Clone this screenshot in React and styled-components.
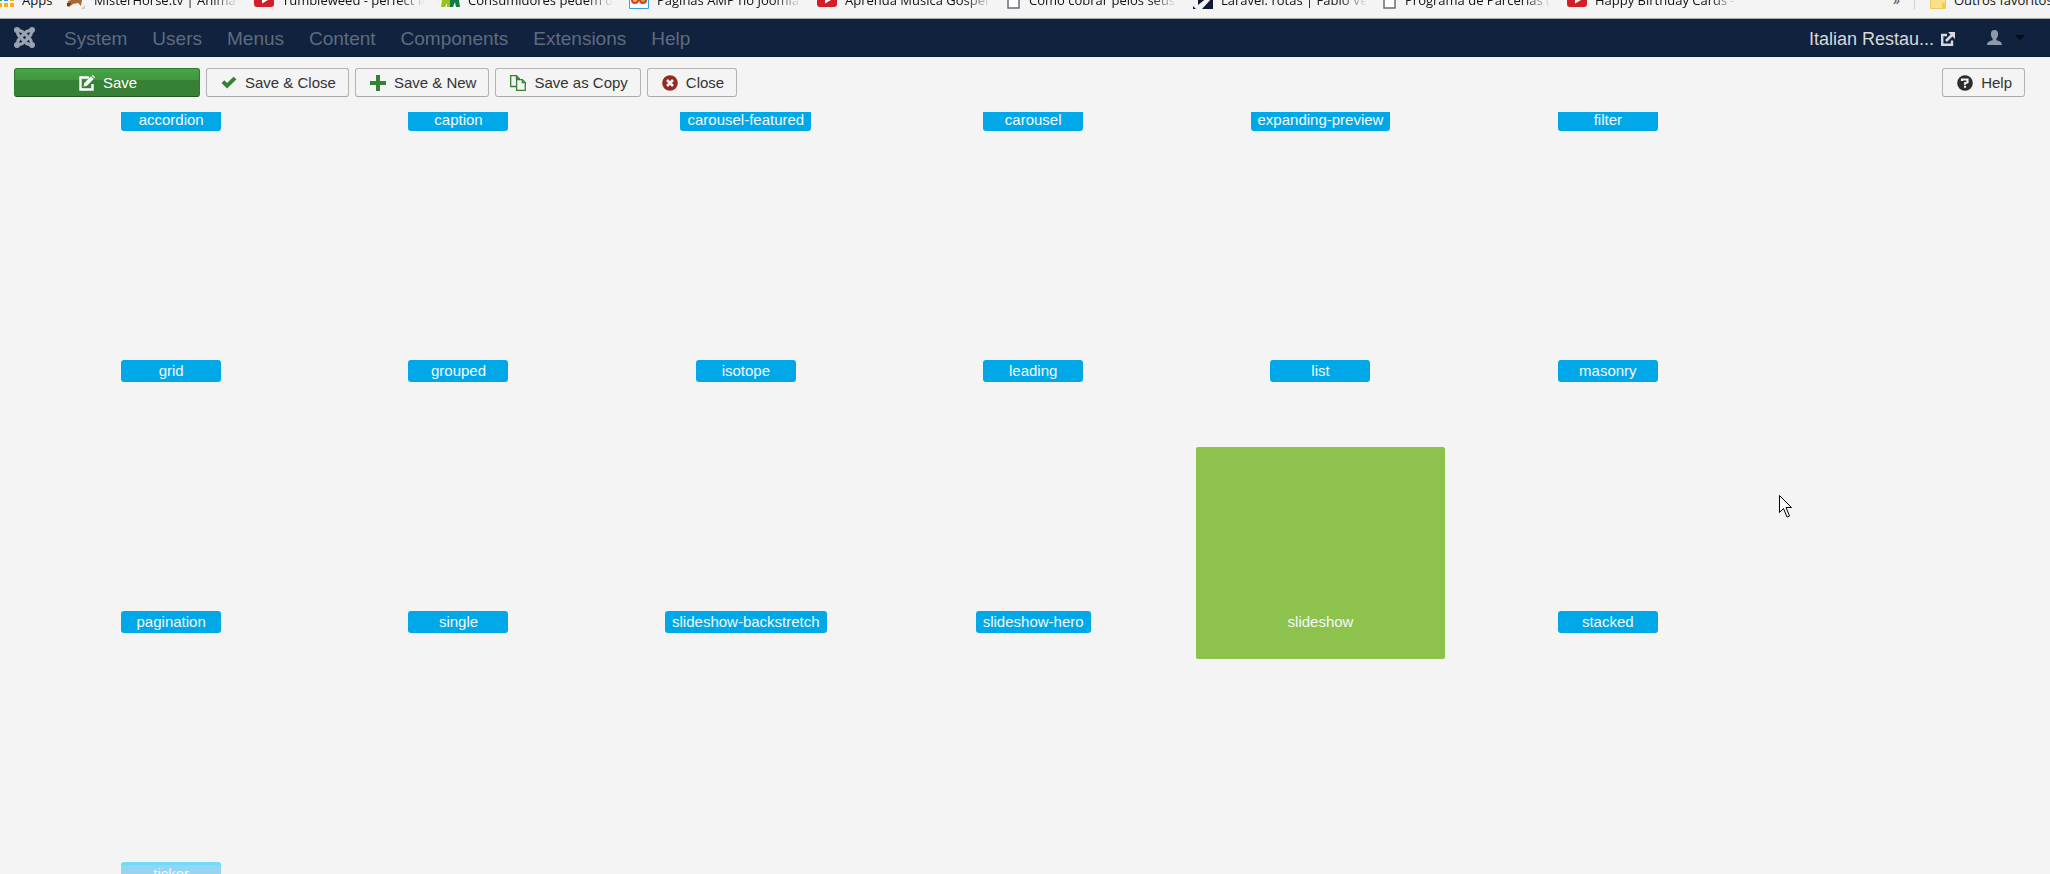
import React from "react";
import styled, { createGlobalStyle } from "styled-components";

const Global = createGlobalStyle`
  * { box-sizing: border-box; }
  body {
    margin: 0;
    background: #f4f4f4;
    font-family: "Liberation Sans", Arial, sans-serif;
    font-size: 15px;
    color: #333;
  }
`;

const Page = styled.div`
  display: flex;
  flex-direction: column;
  height: 100vh;
  overflow: hidden;
`;

const Bookmarks = styled.nav`
  display: flex;
  align-items: flex-end;
  height: 19px;
  padding-bottom: 9px;
  overflow: hidden;
  flex: none;
  border-bottom: 1px solid #a9a9a9;
`;

const Bookmark = styled.a`
  display: flex;
  flex: none;
  align-items: flex-end;
  width: ${(p) => p.$width}px;
  gap: 8px;
  color: #111;
  text-decoration: none;
  svg { flex: none; }
`;

const BookmarkText = styled.span`
  flex: 1;
  min-width: 0;
  margin-right: ${(p) => (p.$fade ? 16 : 0)}px;
  padding-bottom: 1px;
  line-height: 16px;
  font-family: "Open Sans", sans-serif;
  font-size: 13px;
  white-space: nowrap;
  overflow: hidden;
  mask-image: ${(p) => (p.$fade ? "linear-gradient(to left, transparent, #000 26px)" : "none")};
`;

const More = styled.button`
  margin: 0 15px 0 auto;
  padding: 0 14px 1px 0;
  border: 0;
  border-right: 1px solid #d0d0d0;
  background: none;
  font-family: "Open Sans", sans-serif;
  font-size: 14px;
  line-height: 16px;
  color: #444;
`;

const Navbar = styled.header`
  display: flex;
  align-items: center;
  flex: none;
  height: 38px;
  padding: 0 25px 0 14px;
  background: #10223e;
  border-bottom: 1px solid #0d1b33;
  font-size: 19px;
  line-height: 24px;
`;

const Logo = styled.a`
  display: flex;
  margin-right: 29px;
  color: #9ba3b1;
`;

const Menu = styled.nav`
  display: flex;
  gap: 25px;
  padding-top: 2px;
`;

const MenuLink = styled.a`
  color: #5f6b7f;
  text-decoration: none;
`;

const SiteLink = styled.a`
  display: flex;
  align-items: center;
  gap: 7px;
  margin-left: auto;
  padding-top: 2px;
  color: #d9d9d9;
  text-decoration: none;
  font-size: 18px;
`;

const UserButton = styled.button`
  display: flex;
  align-items: center;
  gap: 13px;
  margin-left: 32px;
  padding: 0;
  border: 0;
  background: none;
  color: #9099a8;
`;

const Toolbar = styled.div`
  display: flex;
  flex: none;
  gap: 6px;
  padding: 11px 25px 15px 14px;
`;

const Button = styled.button`
  display: flex;
  align-items: center;
  justify-content: center;
  gap: 8px;
  height: 29px;
  min-width: ${(p) => (p.$primary ? 186 : 0)}px;
  margin-left: ${(p) => (p.$end ? "auto" : 0)};
  padding: 0 12px 0 14px;
  border: 1px solid ${(p) => (p.$primary ? "#2f7a30" : "#b3b3b3")};
  border-bottom-color: ${(p) => (p.$primary ? "#24551f" : "#a8a8a8")};
  border-radius: 3px;
  background: ${(p) => (p.$primary ? "linear-gradient(#46a546 0, #409740 40%, #378137 42%, #378137)" : "#f4f4f4")};
  color: ${(p) => (p.$primary ? "#fff" : "#333")};
  font-family: inherit;
  font-size: 15px;
  line-height: 20px;
  white-space: nowrap;
`;

const Viewport = styled.main`
  flex: 1;
  min-height: 0;
  overflow: hidden;
`;

/* The list is scrolled part of the way through its first row. */
const Grid = styled.div`
  display: grid;
  grid-template-columns: repeat(6, 1fr);
  gap: 39px;
  margin-top: -167px;
  padding: 0 318px 0 47px;
`;

const Tile = styled.button`
  display: flex;
  align-items: flex-end;
  justify-content: center;
  height: 212px;
  padding: 0 0 26px;
  border: 0;
  border-radius: 2px;
  background: ${(p) => (p.$selected ? "#8dc24d" : "transparent")};
  font-family: inherit;
`;

const TileLabel = styled.span`
  min-width: 100px;
  height: 22px;
  padding: 0 7px;
  border-radius: 3px;
  background: ${(p) => (p.$selected ? "transparent" : p.$faded ? "#93d5f3" : "#00a8e8")};
  border-top: ${(p) => (p.$faded ? "3px solid #6fdcfa" : "0")};
  color: #f4f8fa;
  font-size: 15px;
  line-height: ${(p) => (p.$faded ? 18 : 22)}px;
  text-align: center;
  white-space: nowrap;
`;

const Pointer = styled.svg`
  position: absolute;
  left: 1779px;
  top: 495px;
`;

const icons = {
  apps: (
    <svg width="14" height="18" viewBox="0 0 14 18">
      <path fill="#d9412f" d="M0 0h3v4H0z" /><path fill="#4aa84a" d="M4 0h4v4H4z" />
      <path fill="#3aa757" d="M0 6h2v4H0z" /><path fill="#2d8cf0" d="M4 6h4v4H4z" />
      <path fill="#fbb012" d="M10 6h4v4h-4zM0 12h2v4H0zM4 12h4v4H4zM10 12h4v4h-4z" />
    </svg>
  ),
  horse: (
    <svg width="19" height="18" viewBox="0 0 19 18">
      <path fill="#a86b36" d="M1 10l12-4 2 3-1 6-3-3-5 1-4 3-2-1z" /><path fill="#5e3a22" d="M0 12l4 0-2 3H0z" /><path fill="#ccc" d="M18 14v4h-4z" />
    </svg>
  ),
  youtube: (
    <svg width="20" height="16" viewBox="0 0 20 16">
      <rect width="20" height="14" rx="3" fill="#d01f26" /><path fill="#fff" d="M8 3l6 4-6 3.500z" />
    </svg>
  ),
  green: (
    <svg width="19" height="17" viewBox="0 0 19 17">
      <path fill="#99c21c" d="M0 15L2 2h7v13H6v-4l-2 4z" /><path fill="#127a42" d="M9 15V2h8l2 13h-4l-1-5-2 5z" />
    </svg>
  ),
  amp: (
    <svg width="20" height="18" viewBox="0 0 20 18">
      <path fill="#fff" stroke="#37a3dd" d="M.5 0v17.500h19V0" />
      <circle cx="6" cy="9" r="3" fill="#f8c24b" stroke="#dd3b2c" strokeWidth="2" /><circle cx="14" cy="9" r="3" fill="#8dc24d" stroke="#dd3b2c" strokeWidth="2" />
    </svg>
  ),
  page: (
    <svg width="14" height="16" viewBox="0 0 14 16">
      <path fill="#fff" stroke="#676c78" strokeWidth="1.500" d="M1 0v15h11V0" />
    </svg>
  ),
  dark: (
    <svg width="20" height="18" viewBox="0 0 20 18">
      <path fill="#0e1b33" d="M5 0h15v18H9L20 6V2L5 14zM0 15l3 3H0z" />
    </svg>
  ),
  folder: (
    <svg width="16" height="16" viewBox="0 0 16 16">
      <path fill="#fbe08a" stroke="#eacb62" d="M.5.5h11l4 3v12H.5z" /><path fill="#f2cc58" d="M12 10h4v6h-4z" />
    </svg>
  ),
};

const bookmarks = [
  ["Apps", "apps", 67, false],
  ["MisterHorse.tv | Animation", "horse", 187, true],
  ["Tumbleweed - perfect for", "youtube", 187, true],
  ["Consumidores pedem da", "green", 188, true],
  ["Páginas AMP no Joomla", "amp", 188, true],
  ["Aprenda Música Gospel", "youtube", 190, true],
  ["Como cobrar pelos seus", "page", 186, true],
  ["Laravel: rotas | Fabio Vedo", "dark", 190, true],
  ["Programa de Parcerias (", "page", 184, true],
  ["Happy Birthday Cards - ", "youtube", 186, true],
];

function JoomlaIcon() {
  return (
    <svg width="21" height="21" viewBox="0 0 21 21" fill="none" stroke="currentColor" strokeWidth="3.200">
      {[0, 90, 180, 270].map((r) => (
        <g key={r} transform={`rotate(${r} 10.5 10.5)`}>
          <circle cx="3" cy="3" r="3" fill="currentColor" stroke="none" />
          <path d="M3 3L3.800 6.500Q4 8 5.200 9.200L11 15" />
          <path d="M3 3L6.500 3.800Q8 4 9.500 5.500" />
        </g>
      ))}
    </svg>
  );
}

function EditIcon() {
  return (
    <svg width="16" height="16" viewBox="0 0 16 16" fill="none">
      <path d="M10 2.500H1.500v12h12V9" stroke="currentColor" strokeWidth="2.400" />
      <path d="M4.500 11.500l.8-3.500L12 1.300 14.700 4 8 10.700z" fill="currentColor" />
      <path d="M12.800.6l1-.6L16 2.200l-.6 1z" fill="currentColor" />
    </svg>
  );
}

function CheckIcon() {
  return (
    <svg width="16" height="13" viewBox="0 0 15 13">
      <path fill="#378137" d="M0 7l2.800-2.800L5.600 7 12 .8 15 3.300 5.600 12.400z" />
    </svg>
  );
}

function PlusIcon() {
  return (
    <svg width="16" height="16" viewBox="0 0 16 16">
      <path fill="#378137" d="M6 0h4v6h6v4h-6v6H6v-6H0V6h6z" />
    </svg>
  );
}

function CopyIcon() {
  return (
    <svg width="16" height="16" viewBox="0 0 16 16" fill="#f4f4f4" stroke="#378137" strokeWidth="1.300">
      <path d="M.7.700h5.700l3 3v7.800H.7z" /><path d="M6.400.700v3h3" fill="none" />
      <path d="M6.600 4.600h5.700l3 3v7.700H6.600z" /><path d="M12.300 4.600v3h3" fill="none" />
    </svg>
  );
}

function CloseIcon() {
  return (
    <svg width="16" height="16" viewBox="0 0 16 16">
      <circle cx="8" cy="8" r="7.800" fill="#942a25" />
      <path d="M5 5l6 6M11 5l-6 6" stroke="#f4f4f4" strokeWidth="2.600" />
    </svg>
  );
}

function HelpIcon() {
  return (
    <svg width="16" height="16" viewBox="0 0 16 16" fill="none">
      <circle cx="8" cy="8" r="7.800" fill="#2c2c2c" />
      <path d="M5 6V4.500h5.500v2.800L8 8.200v1.600M8 10.800v2" stroke="#f4f4f4" strokeWidth="2.200" />
    </svg>
  );
}

function ExternalIcon() {
  return (
    <svg width="14" height="14" viewBox="0 0 14 14" fill="none" stroke="currentColor" strokeWidth="2.400">
      <path d="M6 3H1.200v9.800H11V8.500" />
      <path d="M5 9l6.500-6.500" strokeWidth="2.600" /><path d="M7 0h7v7z" fill="currentColor" stroke="none" />
    </svg>
  );
}

function UserIcon() {
  return (
    <svg width="15" height="15" viewBox="0 0 15 15" fill="currentColor">
      <path d="M7.500 0c2.300 0 3.600 1.500 3.600 3.900 0 2-.7 3.600-1.700 4.600v1.700c2.800.4 5.600 1.800 5.600 4.800H0c0-3 2.800-4.400 5.600-4.800V8.500C4.600 7.500 3.900 5.900 3.900 3.900 3.900 1.500 5.200 0 7.500 0z" />
    </svg>
  );
}

const menu = ["System", "Users", "Menus", "Content", "Components", "Extensions", "Help"];

const layouts = [
  "accordion", "caption", "carousel-featured", "carousel", "expanding-preview", "filter",
  "grid", "grouped", "isotope", "leading", "list", "masonry",
  "pagination", "single", "slideshow-backstretch", "slideshow-hero", "slideshow", "stacked",
  "ticker",
];

export default function App() {
  return (
    <Page>
      <Global />
      <Bookmarks aria-label="Bookmarks">
        {bookmarks.map(([text, icon, width, fade]) => (
          <Bookmark key={text} href="#" $width={width}>
            {icons[icon]}
            <BookmarkText $fade={fade}>{text}</BookmarkText>
          </Bookmark>
        ))}
        <More type="button">»</More>
        <Bookmark href="#" $width={120}>
          {icons.folder}
          <BookmarkText>Outros favoritos</BookmarkText>
        </Bookmark>
      </Bookmarks>
      <Navbar>
        <Logo href="#" aria-label="Joomla"><JoomlaIcon /></Logo>
        <Menu>
          {menu.map((m) => <MenuLink key={m} href="#">{m}</MenuLink>)}
        </Menu>
        <SiteLink href="#">Italian Restau... <ExternalIcon /></SiteLink>
        <UserButton type="button" aria-label="User menu">
          <UserIcon />
          <svg width="10" height="5" viewBox="0 0 10 5"><path d="M0 0h10L5 5z" fill="#050a12" /></svg>
        </UserButton>
      </Navbar>
      <Toolbar>
        <Button type="button" $primary><EditIcon />Save</Button>
        <Button type="button"><CheckIcon />Save &amp; Close</Button>
        <Button type="button"><PlusIcon />Save &amp; New</Button>
        <Button type="button"><CopyIcon />Save as Copy</Button>
        <Button type="button"><CloseIcon />Close</Button>
        <Button type="button" $end><HelpIcon />Help</Button>
      </Toolbar>
      <Viewport>
        <Grid>
          {layouts.map((name) => (
            <Tile key={name} type="button" $selected={name === "slideshow"}>
              <TileLabel $selected={name === "slideshow"} $faded={name === "ticker"}>{name}</TileLabel>
            </Tile>
          ))}
        </Grid>
      </Viewport>
      <Pointer width="14" height="23" viewBox="0 0 14 23">
        <path d="M.5.5v17l4-4 3.500 8.500 2.500-1-3.500-8.500h5.500z" fill="#fff" stroke="#000" />
      </Pointer>
    </Page>
  );
}
